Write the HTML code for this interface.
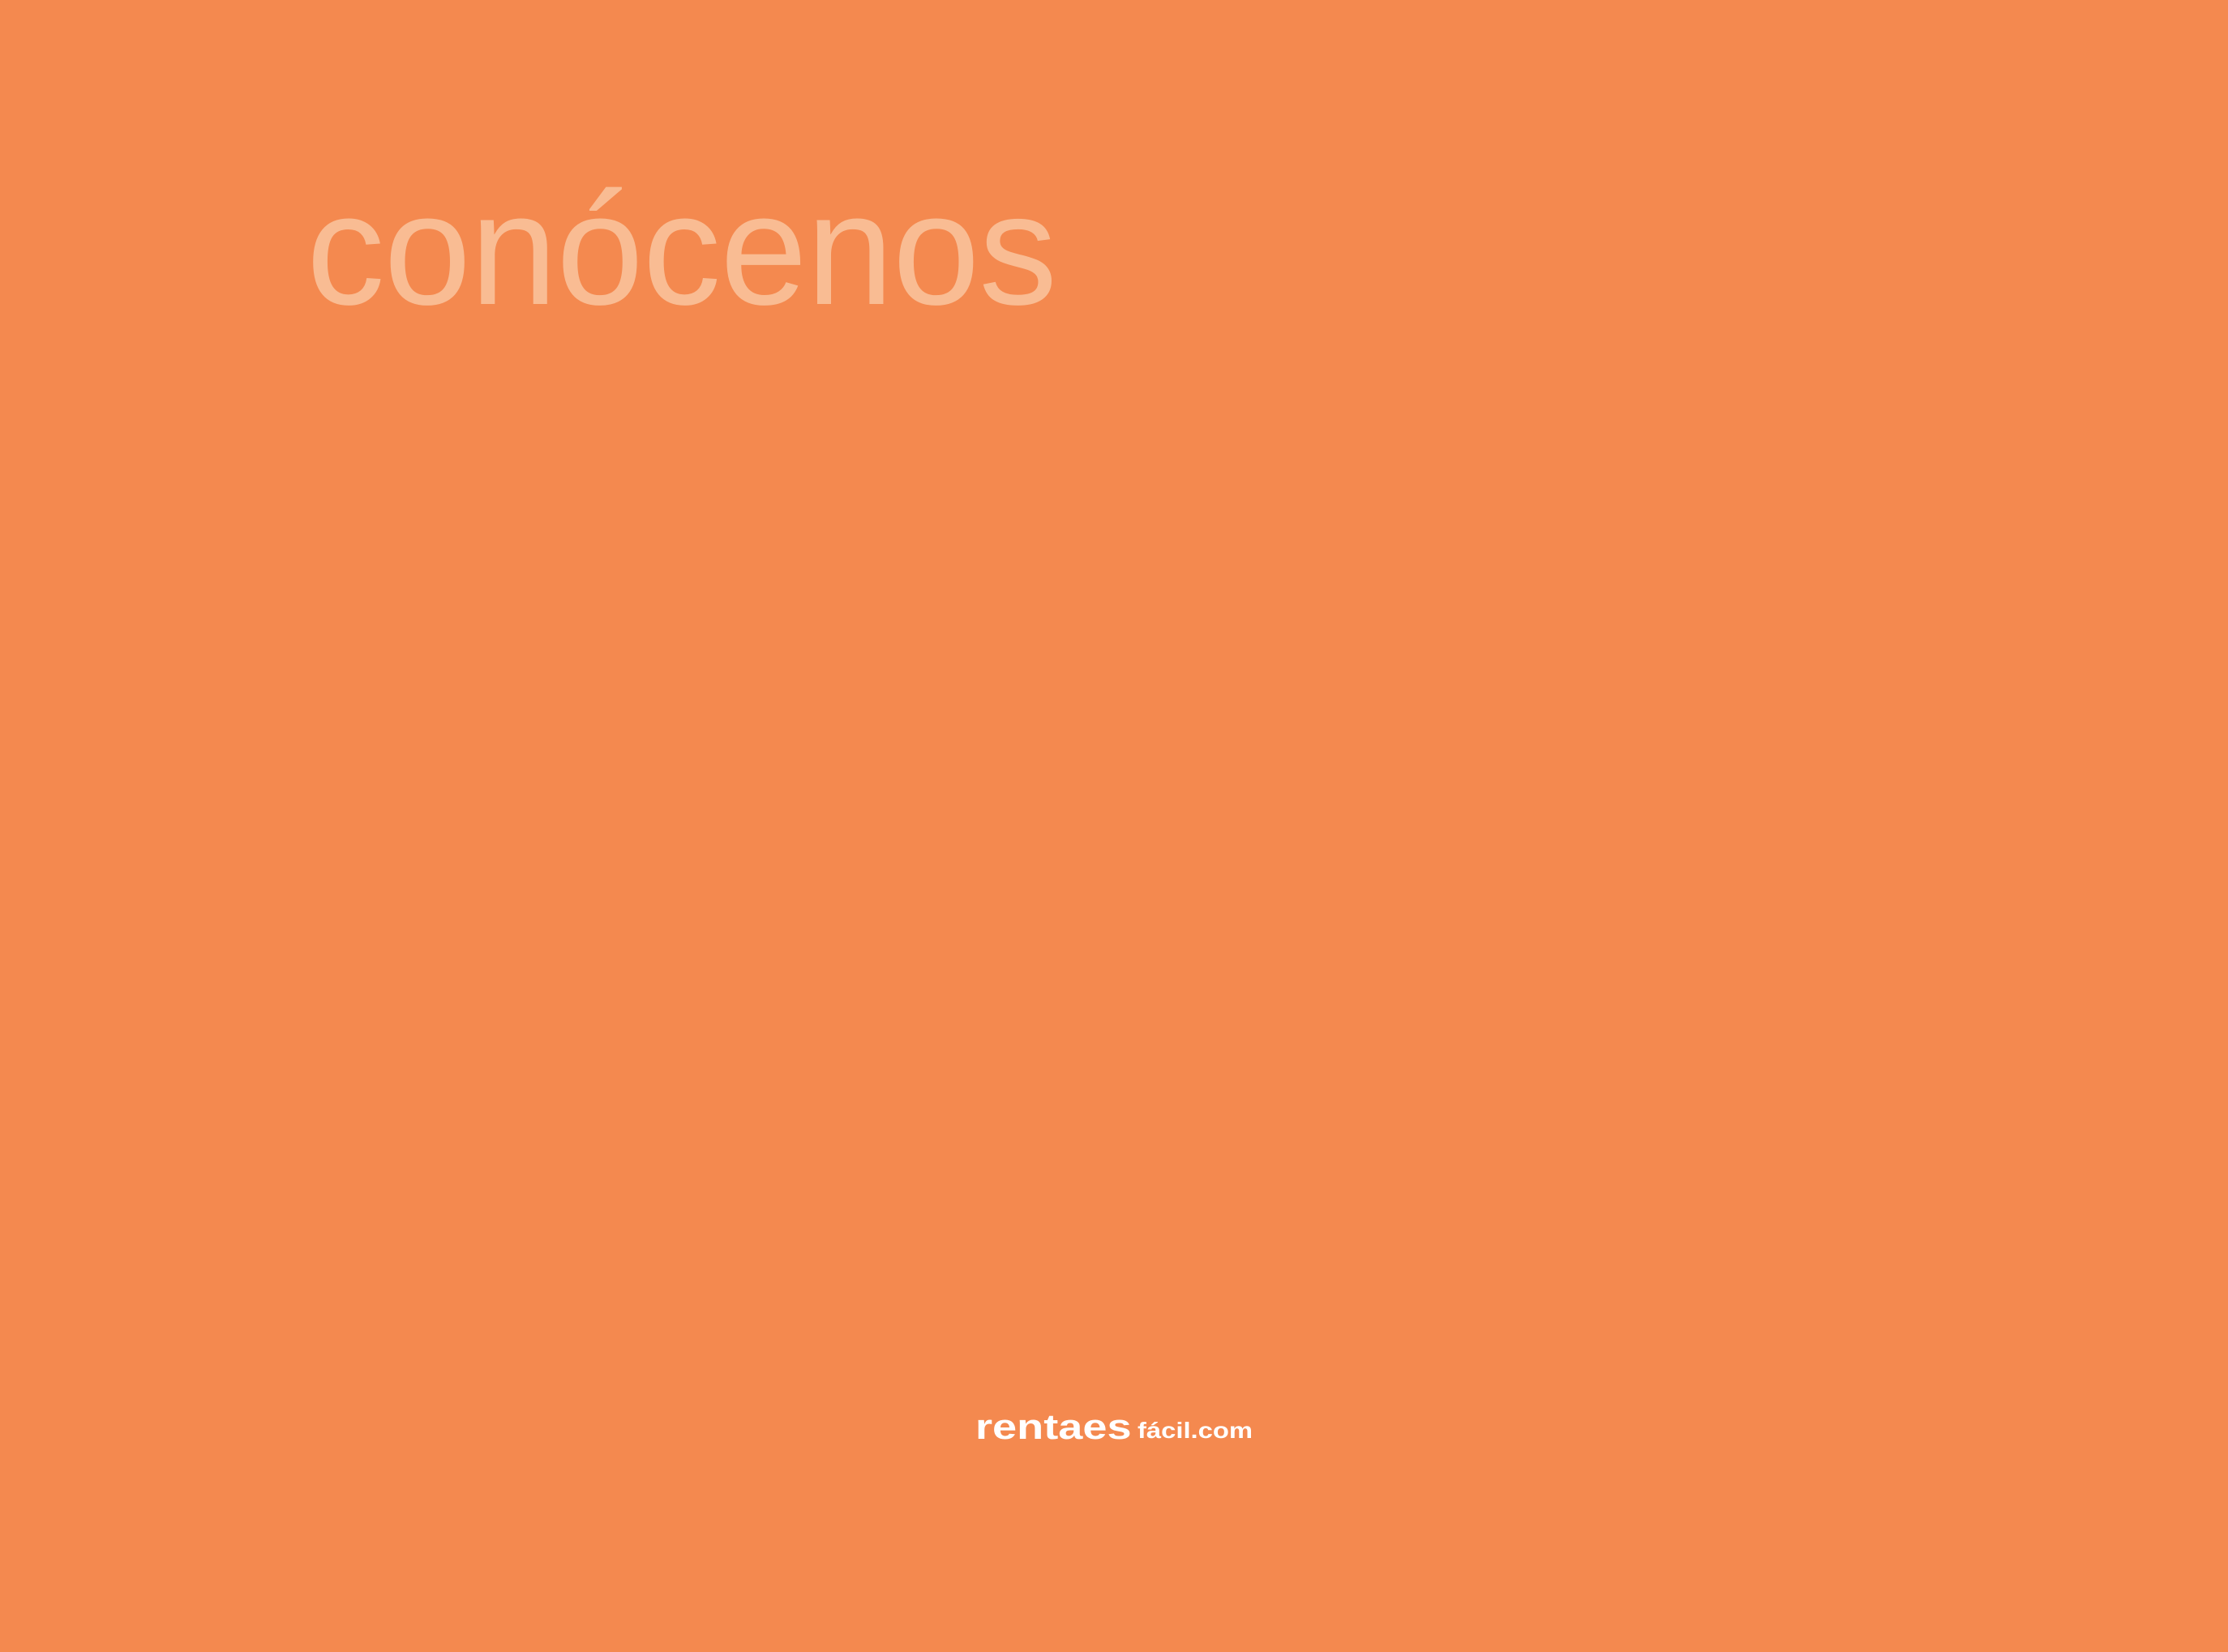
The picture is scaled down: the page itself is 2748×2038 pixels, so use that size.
<!DOCTYPE html>
<html><head><meta charset="utf-8"><style>
html,body{margin:0;padding:0;}
body{width:2748px;height:2038px;background:#f4894f;position:relative;overflow:hidden;font-family:"Liberation Sans",sans-serif;}
.t{position:absolute;left:378px;top:210px;font-size:196px;line-height:1;color:#f9bc93;font-weight:normal;letter-spacing:-1px;transform-origin:left top;transform:scaleX(0.985);}
.l1{position:absolute;left:1203px;top:1739px;font-size:44px;line-height:1;font-weight:bold;color:#fff;transform-origin:left top;transform:scaleX(1.23);}
.l2{position:absolute;left:1403px;top:1751px;font-size:28px;line-height:1;font-weight:bold;color:#fff;transform-origin:left top;transform:scaleX(1.17);}
</style></head><body>
<div class="t">conócenos</div>
<div class="l1">rentaes</div>
<div class="l2">fácil.com</div>
</body></html>
